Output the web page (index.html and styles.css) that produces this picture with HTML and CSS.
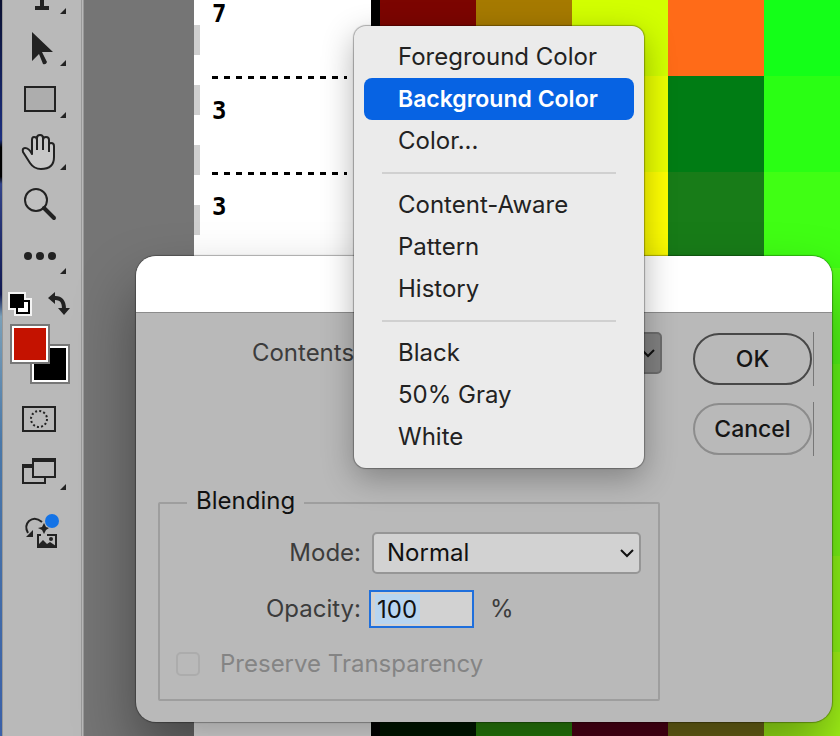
FILE: index.html
```html
<!DOCTYPE html>
<html lang="en">
<head>
    <meta charset="UTF-8">
    <meta name="viewport" content="width=device-width, initial-scale=1.0">
    <title>Fill</title>
    <link rel="stylesheet" href="styles.css">
</head>
<body>
    <div class="app">
        <div class="desktop-edge"></div>

        <div class="toolbar">
            <button class="tool tool-cut" aria-label="Type">
                <svg width="76" height="23" viewBox="0 0 76 23">
                    <path d="M38 0V8M31 8H45" stroke="#222" stroke-width="4" fill="none"/>
                    <path d="M62 8V14H56Z" fill="#222"/>
                </svg>
            </button>
            <button class="tool" aria-label="Path selection">
                <svg width="76" height="52" viewBox="0 0 76 52">
                    <path d="M28 9L49 29H38L43 39Q42 42 39 41L35 31L28 38Z" fill="#222"/>
                    <path d="M62 37V43H56Z" fill="#222"/>
                </svg>
            </button>
            <button class="tool" aria-label="Rectangle">
                <svg width="76" height="52" viewBox="0 0 76 52">
                    <rect x="21" y="12" width="30" height="24" fill="#adadad" stroke="#222" stroke-width="2"/>
                    <path d="M62 37V43H56Z" fill="#222"/>
                </svg>
            </button>
            <button class="tool" aria-label="Hand">
                <svg width="76" height="52" viewBox="0 0 76 52">
                    <path d="M28 26V13Q28 10 30 10Q33 10 33 13V11Q33 8 36 8Q39 8 39 11V13Q39 10 42 10Q45 10 45 13V18Q45 16 47 16Q50 16 50 19V30Q50 42 37 42Q30 42 26 36L19 25Q18 21 21 21Q25 21 28 27Z" fill="#c8c8c8" stroke="#222" stroke-width="2" stroke-linejoin="round"/>
                    <path d="M33 12V23M39 12V23M45 15V25" stroke="#222" stroke-width="2" fill="none"/>
                    <path d="M62 37V43H56Z" fill="#222"/>
                </svg>
            </button>
            <button class="tool" aria-label="Zoom">
                <svg width="76" height="52" viewBox="0 0 76 52">
                    <circle cx="32" cy="21" r="11" fill="#c0c0c0" stroke="#222" stroke-width="2"/>
                    <path d="M40 29L50 39" stroke="#222" stroke-width="4" stroke-linecap="round"/>
                </svg>
            </button>
            <button class="tool" aria-label="Edit toolbar">
                <svg width="76" height="52" viewBox="0 0 76 52">
                    <g fill="#222">
                        <circle cx="24" cy="25" r="4"/>
                        <circle cx="36" cy="25" r="4"/>
                        <circle cx="48" cy="25" r="4"/>
                        <path d="M62 37V43H56Z"/>
                    </g>
                </svg>
            </button>
            <button class="tool tool-colors" aria-label="Foreground and background color">
                <svg width="76" height="110" viewBox="0 0 76 110">
                    <rect x="10" y="15" width="18" height="18" fill="#f4f4f4"/>
                    <rect x="4" y="9" width="18" height="18" fill="#f4f4f4"/>
                    <rect x="13" y="18" width="12" height="12" fill="#fff" stroke="#000" stroke-width="2"/>
                    <path d="M6 11H20V25H6Z" fill="#000"/>
                    <path d="M50 15Q60 14 60 26" stroke="#222" stroke-width="4" fill="none"/>
                    <path d="M44 15L51 9V21ZM54 25H66L60 32Z" fill="#222"/>
                    <rect x="26" y="61" width="40" height="40" fill="#777"/>
                    <rect x="28" y="63" width="36" height="36" fill="#fff"/>
                    <rect x="30" y="65" width="32" height="32" fill="#000"/>
                    <rect x="6" y="41" width="40" height="40" fill="#777"/>
                    <rect x="8" y="43" width="36" height="36" fill="#fff"/>
                    <rect x="10" y="45" width="32" height="32" fill="#c41200"/>
                </svg>
            </button>
            <button class="tool" aria-label="Quick mask">
                <svg width="76" height="52" viewBox="0 0 76 52">
                    <rect x="19" y="14" width="32" height="24" fill="none" stroke="#222" stroke-width="2"/>
                    <circle cx="35" cy="26" r="8" fill="none" stroke="#222" stroke-width="2" stroke-dasharray="2 2.19"/>
                </svg>
            </button>
            <button class="tool" aria-label="Screen mode">
                <svg width="76" height="52" viewBox="0 0 76 52">
                    <path d="M19 20H29V32H41V38H19Z" fill="none" stroke="#222" stroke-width="2"/>
                    <path d="M18 19H30V23H18Z" fill="#222"/>
                    <rect x="29" y="14" width="22" height="18" fill="#bbb" stroke="#222" stroke-width="2"/>
                    <path d="M28 13H52V17H28Z" fill="#222"/>
                    <path d="M62 39V45H56Z" fill="#222"/>
                </svg>
            </button>
            <button class="tool tool-last" aria-label="Generate image">
                <svg width="76" height="60" viewBox="0 0 76 60">
                    <path d="M38 19Q31 13 25 18Q20 23 24 30" fill="none" stroke="#222" stroke-width="2"/>
                    <path d="M22 34H29V27Z" fill="#222"/>
                    <path d="M40 20L42 24L45 25L42 27L40 31L38 27L34 25L38 24Z" fill="#222"/>
                    <path d="M37 32H34V44H52V32H43" fill="none" stroke="#222" stroke-width="2"/>
                    <path d="M34 42L39 37L43 41L46 39L52 43V45H34Z" fill="#222"/>
                    <circle cx="47" cy="36" r="2" fill="#222"/>
                    <circle cx="48" cy="18" r="7" fill="#1473e6"/>
                </svg>
            </button>
        </div>

        <div class="workspace"></div>

        <div class="canvas">
            <div class="ruler"></div>
            <div class="notes">
                <div class="note">7</div>
                <div class="note">3</div>
                <div class="note">3</div>
            </div>
            <div class="swatches">
                <i class="dark-red"></i><i class="ochre"></i><i class="lime"></i><i class="orange"></i><i class="green1"></i>
                <i class="dark-red"></i><i class="ochre"></i><i class="yellow1"></i><i class="forest1"></i><i class="green2"></i>
                <i class="dark-red"></i><i class="ochre"></i><i class="yellow2"></i><i class="forest2"></i><i class="green3"></i>
                <i></i><i></i><i></i><i></i><i class="green4"></i>
                <i></i><i></i><i></i><i></i><i class="green5"></i>
                <i></i><i></i><i></i><i></i><i class="green6"></i>
                <i></i><i></i><i></i><i></i><i class="green7"></i>
                <i class="night"></i><i class="grass"></i><i class="wine"></i><i class="olive"></i><i class="green8"></i>
            </div>
        </div>
    </div>

    <form class="dialog">
        <div class="titlebar"></div>
        <div class="dialog-body">
            <div class="settings">
                <div class="row contents-row">
                    <label for="contents">Contents:</label>
                    <select id="contents" class="open">
                        <option>Background Color</option>
                    </select>
                </div>

                <fieldset>
                    <legend>Blending</legend>
                    <div class="row">
                        <label for="mode">Mode:</label>
                        <select id="mode">
                            <option>Normal</option>
                        </select>
                    </div>
                    <div class="row opacity-row">
                        <label for="opacity">Opacity:</label>
                        <input type="text" id="opacity" value="100">
                        <span class="unit">%</span>
                    </div>
                    <div class="check-row">
                        <input type="checkbox" id="preserve" disabled>
                        <label for="preserve">Preserve Transparency</label>
                    </div>
                </fieldset>
            </div>

            <div class="actions">
                <div class="action"><button type="button" class="ok">OK</button></div>
                <div class="action"><button type="button">Cancel</button></div>
            </div>
        </div>
    </form>

    <div class="menu" role="menu">
        <button role="menuitem">Foreground Color</button>
        <button role="menuitem" class="selected">Background Color</button>
        <button role="menuitem">Color...</button>
        <hr>
        <button role="menuitem">Content-Aware</button>
        <button role="menuitem">Pattern</button>
        <button role="menuitem">History</button>
        <hr>
        <button role="menuitem">Black</button>
        <button role="menuitem">50% Gray</button>
        <button role="menuitem">White</button>
    </div>
</body>
</html>
```

FILE: styles.css
```css
*{
    box-sizing: border-box;
}
body{
    margin: 0;
    height: 100vh;
    overflow: hidden;
    position: relative;
    font-family: Inter, "Liberation Sans", sans-serif;
    font-size: 24px;
    line-height: 28px;
    color: #222;
}
button, input, select{
    font: inherit;
    color: inherit;
}

/* application behind the dialog */
.app{
    display: flex;
    height: 100%;
}
.desktop-edge{
    width: 2px;
    background: linear-gradient(#0a1030, #1c2f80 19%, #000 20%, #000 24%, #33448a 25%, #101850 40%, #7ba0b8 43%, #4a78a8 60%, #3a60a8);
}
.toolbar{
    width: 82px;
    padding-left: 1px;
    background-color: #b9b9b9;
    border-left: 1px solid #999;
    border-right: 3px double #999;
    display: flex;
    flex-direction: column;
    align-items: flex-start;
}
.tool{
    border: none;
    padding: 0;
    background: none;
    height: 52px;
}
.tool svg{
    display: block;
}
.tool-cut{
    height: 23px;
}
.tool-colors{
    height: 110px;
}
.tool-last{
    height: 60px;
    margin-top: 6px;
}
.workspace{
    width: 110px;
    background-color: #757575;
}
.canvas{
    flex: 1;
    display: flex;
    background-color: #fff;
}
.ruler{
    width: 6px;
    background: repeating-linear-gradient(#fff 0 25px, #cfcfcf 25px 55px, #fff 55px 60px);
}
.notes{
    width: 171px;
    padding-left: 12px;
    font-family: "DejaVu Sans Mono", monospace;
    font-weight: bold;
    color: #000;
}
.note{
    width: 135px;
    height: 96px;
    padding-top: 18px;
    background: repeating-linear-gradient(90deg, #000 0 6px, transparent 6px 12px) bottom / 100% 3px no-repeat;
}
.note:first-child{
    height: 79px;
    padding-top: 0;
}
.swatches{
    flex: 1;
    border-left: 9px solid #000;
    display: grid;
    grid-template-columns: repeat(4, 96px) 1fr;
    grid-template-rows: 76px;
    grid-auto-rows: 96px;
    overflow: hidden;
}
.dark-red{ background-color: #7c0500; }
.ochre{ background-color: #a67a00; }
.lime{ background-color: #d2ff00; }
.orange{ background-color: #ff6b18; }
.yellow1{ background-color: #e9ff00; }
.yellow2{ background-color: #ffff00; }
.forest1{ background-color: #007c14; }
.forest2{ background-color: #187c18; }
.night{ background-color: #001a00; }
.grass{ background-color: #2c8c0c; }
.wine{ background-color: #550018; }
.olive{ background-color: #776f18; }
.green1{ background-color: #14ff18; }
.green2{ background-color: #2aff14; }
.green3{ background-color: #40ff14; }
.green4{ background-color: #55ff18; }
.green5{ background-color: #66ff18; }
.green6{ background-color: #7cff18; }
.green7{ background-color: #92ff18; }
.green8{ background-color: #a8ff18; }

/* fill dialog */
.dialog{
    position: absolute;
    left: 136px;
    right: 8px;
    top: 256px;
    border-radius: 20px;
    background-color: #b9b9b9;
    box-shadow: 0 0 1px 1px rgba(0, 0, 0, 0.3), 0 32px 60px rgba(0, 0, 0, 0.4);
    overflow: hidden;
}
.titlebar{
    height: 57px;
    background-color: #fff;
    border-bottom: 1px solid #8c8c8c;
}
.dialog-body{
    display: flex;
    gap: 31px;
    padding: 19px 18px 21px 22px;
}
.settings{
    flex: 1;
}
.row{
    display: flex;
    align-items: center;
    gap: 11px;
}
.row label{
    width: 201px;
    text-align: right;
    color: #3c3c3c;
}
.contents-row label{
    width: 203px;
}
select{
    flex: 1;
    height: 42px;
    padding: 0 13px;
    appearance: none;
    color: #111;
    border: 2px solid #969696;
    border-radius: 5px;
    background: #d2d2d2 url("data:image/svg+xml,%3Csvg xmlns='http://www.w3.org/2000/svg' width='14' height='9'%3E%3Cpath d='M1 1L7 7L13 1' fill='none' stroke='%23111' stroke-width='2'/%3E%3C/svg%3E") right 5px center no-repeat;
}
select.open{
    background-color: #808080;
    border-color: #6c6c6c;
}
fieldset{
    margin: 113px 2px 0 0;
    padding: 13px 17px 21px 0;
    border: 2px solid #9e9e9e;
    border-radius: 2px;
    min-width: 0;
}
legend{
    margin-left: 27px;
    padding: 0 9px 4px;
    color: #111;
}
.opacity-row{
    gap: 8px;
    margin-top: 16px;
}
#opacity{
    width: 105px;
    height: 38px;
    padding: 0 6px;
    color: #111;
    border: 2px solid #1f6fdc;
    border-radius: 0;
    outline: none;
    background: linear-gradient(#b8d5f0, #b8d5f0) 4px center / 45px 30px no-repeat #d2d2d2;
}
.unit{
    margin-left: 8px;
    color: #3c3c3c;
}
.check-row{
    display: flex;
    align-items: center;
    gap: 20px;
    margin-top: 22px;
    padding-left: 16px;
    color: #848484;
}
.check-row input{
    appearance: none;
    width: 24px;
    height: 24px;
    margin: 0;
    border: 2px solid #acacac;
    border-radius: 5px;
}
.actions{
    width: 121px;
    display: flex;
    flex-direction: column;
    gap: 16px;
}
.action{
    height: 54px;
    padding: 1px 0;
    border-right: 1px solid #777;
}
.action button{
    width: 119px;
    height: 52px;
    padding: 0;
    font-size: 23px;
    font-weight: 500;
    color: #151515;
    background: none;
    border: 2px solid #8c8c8c;
    border-radius: 26px;
}
.action .ok{
    border-color: #484848;
}

/* contents drop-down */
.menu{
    position: absolute;
    left: 354px;
    top: 26px;
    width: 290px;
    padding: 10px;
    border-radius: 12px;
    background-color: #ebebeb;
    box-shadow: 0 0 1px 1px rgba(0, 0, 0, 0.3), 0 10px 32px rgba(0, 0, 0, 0.3);
}
.menu button{
    display: block;
    width: 100%;
    height: 42px;
    padding: 0 34px;
    border: none;
    border-radius: 8px;
    background: none;
    text-align: left;
    white-space: nowrap;
}
.menu .selected{
    background-color: #0763e3;
    color: #fff;
    font-size: 23px;
    font-weight: 600;
}
.menu hr{
    height: 2px;
    margin: 10px 18px;
    border: none;
    background-color: #d0d0d0;
}
```
